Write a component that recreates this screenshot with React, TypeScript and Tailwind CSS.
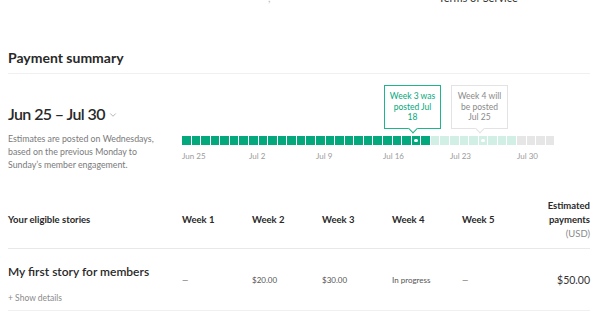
import { ChevronDown } from "lucide-react";

type Day = "done" | "pending" | "future";

const weeks: { label: string; days: Day[]; dot?: number }[] = [
  { label: "Jun 25", days: Array(7).fill("done") },
  { label: "Jul 2", days: Array(7).fill("done") },
  { label: "Jul 9", days: Array(7).fill("done") },
  {
    label: "Jul 16",
    days: ["done", "done", "done", "done", "done", "pending", "pending"],
    dot: 3,
  },
  { label: "Jul 23", days: Array(7).fill("pending"), dot: 3 },
  { label: "Jul 30", days: Array(4).fill("future") },
];

const dayColor: Record<Day, string> = {
  done: "bg-[#03a87c]",
  pending: "bg-[#d2efe5]",
  future: "bg-[#e6e6e6]",
};

const rowCells = ["—", "$20.00", "$30.00", "In progress", "—"];

function Tooltip({
  lines,
  tone,
  left,
}: {
  lines: string[];
  tone: "green" | "gray";
  left: string;
}) {
  const green = tone === "green";
  return (
    <div
      className={`absolute top-0 ${left} flex h-[44px] w-[57px] flex-col items-center justify-center border bg-white text-center text-[8.5px] leading-[10.5px] ${
        green ? "border-[#1eb58a] text-[#03a87c]" : "border-[#e3e3e3] text-[#8a8a8a]"
      }`}
    >
      {lines.map((l) => (
        <span key={l}>{l}</span>
      ))}
      <span
        className={`absolute -bottom-[4px] left-1/2 h-[7px] w-[7px] -translate-x-1/2 rotate-45 border-r border-b bg-white ${
          green ? "border-[#1eb58a]" : "border-[#e3e3e3]"
        }`}
      />
    </div>
  );
}

function Timeline() {
  return (
    <div className="relative pt-[51px]">
      <Tooltip left="left-[202px]" tone="green" lines={["Week 3 was", "posted Jul", "18"]} />
      <Tooltip left="left-[269px]" tone="gray" lines={["Week 4 will", "be posted", "Jul 25"]} />
      <div className="flex gap-[1.5px]">
        {weeks.map((w) => (
          <div key={w.label} className="flex gap-px">
            {w.days.map((d, i) => (
              <div
                key={i}
                className={`flex h-[9px] w-[8.5px] items-center justify-center ${dayColor[d]}`}
              >
                {w.dot === i ? <span className="h-[3.5px] w-[3.5px] rounded-full bg-white" /> : null}
              </div>
            ))}
          </div>
        ))}
      </div>
      <div className="mt-[6px] flex text-[8px] leading-[10px] text-[#9a9a9a]">
        {weeks.map((w) => (
          <span key={w.label} className="w-[67px]">
            {w.label}
          </span>
        ))}
      </div>
    </div>
  );
}

export default function App() {
  return (
    <div
      className="h-[315px] w-[602px] overflow-hidden bg-white text-[#292929]"
      style={{ fontFamily: "Lato, 'Noto Sans', sans-serif" }}
    >
      <div className="-mt-[9px] flex text-[11px] leading-[14px] text-[#333]">
        <span className="ml-[268px] text-[#bbb]">,</span>
        <span className="ml-[168px]">Terms of Service</span>
      </div>

      <div className="pl-[8px] pr-[12px]">
        <h2 className="mt-[44px] border-b border-[#f0f0f0] pb-[6px] text-[14px] leading-[18px] font-bold">
          Payment summary
        </h2>

        <div className="mt-[11px] flex">
          <div className="w-[174px] pt-[18px]">
            <div className="flex items-center gap-[3px]">
              <span className="text-[16px] leading-[22px] font-semibold tracking-[-0.6px]">
                Jun 25 – Jul 30
              </span>
              <ChevronDown size={10} strokeWidth={1.5} className="mt-[2px] text-[#8a8a8a]" />
            </div>
            <p className="mt-[7px] text-[8.8px] leading-[13px] whitespace-nowrap text-[#7a7a7a]">
              Estimates are posted on Wednesdays,
              <br />
              based on the previous Monday to
              <br />
              Sunday’s member engagement.
            </p>
          </div>
          <Timeline />
        </div>

        <div className="mt-[28px] grid grid-cols-[174px_70px_70px_70px_70px_70px_1fr] items-center border-b border-[#e8e8e8] pb-[7px] text-[9.5px] font-bold">
          <span>Your eligible stories</span>
          <span>Week 1</span>
          <span>Week 2</span>
          <span>Week 3</span>
          <span>Week 4</span>
          <span>Week 5</span>
          <span className="text-right leading-[14px]">
            Estimated
            <br />
            payments
            <br />
            <span className="font-normal text-[#8a8a8a]">(USD)</span>
          </span>
        </div>

        <div className="grid grid-cols-[174px_70px_70px_70px_70px_70px_1fr] items-start border-b border-[#f0f0f0] pt-[15px] pb-[7px]">
          <div>
            <div className="text-[12px] leading-[16px] font-semibold">My first story for members</div>
            <div className="mt-[13px] text-[8.5px] leading-[10px] text-[#8a8a8a]">+ Show details</div>
          </div>
          {rowCells.map((c, i) => (
            <span key={i} className="pt-[10px] text-[8px] leading-[12px] text-[#555]">
              {c}
            </span>
          ))}
          <span className="pt-[9px] text-right text-[10.5px] leading-[14px] text-[#333]">$50.00</span>
        </div>

        <div className="mx-[29px] mt-[4px] h-px bg-[#ececec]" />
      </div>
    </div>
  );
}
